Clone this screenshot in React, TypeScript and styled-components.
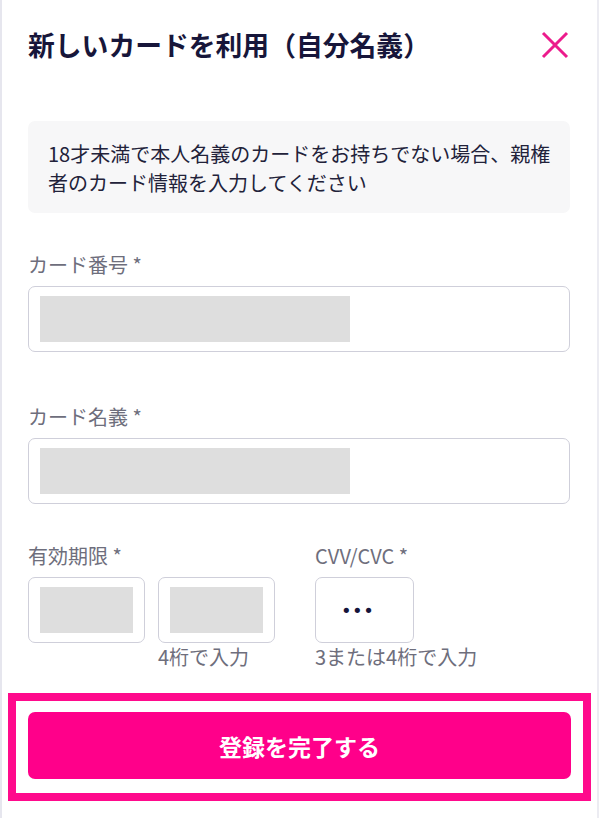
import React from "react";
import styled, { createGlobalStyle } from "styled-components";

const Global = createGlobalStyle`
  html, body { margin: 0; padding: 0; background: #ffffff; }
  body { font-family: "Noto Sans CJK JP", "Noto Sans", sans-serif; }
  * { box-sizing: border-box; }
`;

const Sheet = styled.div`
  width: 599px;
  min-height: 818px;
  border-left: 2px solid #e6e6ee;
  border-right: 2px solid #ececf2;
  background: #fff;
  display: flex;
  flex-direction: column;
`;

const Content = styled.div`
  padding: 27px 27px 0 26px;
  display: flex;
  flex-direction: column;
`;

const Header = styled.div`
  display: flex;
  align-items: center;
  justify-content: space-between;
  height: 36px;
`;

const Title = styled.h1`
  margin: 0;
  font-size: 26.8px;
  line-height: 36px;
  font-weight: 700;
  color: #17163a;
`;

const CloseButton = styled.button`
  border: none;
  background: none;
  padding: 0;
  width: 28px;
  height: 28px;
  margin-right: 1px;
  display: flex;
  align-items: center;
  justify-content: center;
  cursor: pointer;
`;

const Notice = styled.div`
  margin-top: 58px;
  background: #f7f7f8;
  border-radius: 7px;
  padding: 18px 14px 16px 20px;
  font-size: 20px;
  line-height: 29px;
  color: #22223a;
`;

const Label = styled.div<{ $top: number }>`
  margin-top: ${(p) => p.$top}px;
  font-size: 20px;
  line-height: 28px;
  color: #6e6e7c;
`;

const InputBox = styled.div<{ $width?: number }>`
  margin-top: 7px;
  width: ${(p) => (p.$width ? `${p.$width}px` : "100%")};
  height: 66px;
  border: 1.5px solid #cfcfda;
  border-radius: 7px;
  padding: 9px 11px;
  display: flex;
  align-items: center;
  background: #fff;
`;

const Redacted = styled.div<{ $width: number }>`
  width: ${(p) => p.$width}px;
  height: 100%;
  background: #dedede;
`;

const Dots = styled.span`
  padding-left: 14px;
  font-size: 18px;
  letter-spacing: 0.5px;
  color: #15143a;
  font-family: "DejaVu Sans", sans-serif;
`;

const Row = styled.div`
  display: flex;
  gap: 40px;
`;

const FieldGroup = styled.div`
  display: flex;
  flex-direction: column;
`;

const Pair = styled.div`
  display: flex;
  gap: 13px;
`;

const PairItem = styled.div`
  display: flex;
  flex-direction: column;
`;

const Hint = styled.div`
  font-size: 20px;
  line-height: 28px;
  color: #6e6e7c;
  height: 28px;
`;

const Footer = styled.div`
  margin: 22px 6px 0 6px;
  border: 8px solid #ff0a8c;
  padding: 11px 12px 14px 12px;
`;

const Submit = styled.button`
  width: 100%;
  height: 67px;
  border: none;
  border-radius: 7px;
  background: #ff008a;
  color: #fff;
  font-family: "Noto Sans CJK JP", "Noto Sans", sans-serif;
  font-size: 23px;
  font-weight: 700;
  cursor: pointer;
`;

export default function App() {
  return (
    <>
      <Global />
      <Sheet>
        <Content>
          <Header>
            <Title>新しいカードを利用（自分名義）</Title>
            <CloseButton aria-label="閉じる">
              <svg width="28" height="28" viewBox="0 0 28 28">
                <path d="M2 2 L26 26 M26 2 L2 26" stroke="#ec1b8c" strokeWidth="3" strokeLinecap="butt" fill="none" />
              </svg>
            </CloseButton>
          </Header>
          <Notice>
            18才未満で本人名義のカードをお持ちでない場合、親権者のカード情報を入力してください
          </Notice>

          <Label $top={38}>カード番号 *</Label>
          <InputBox>
            <Redacted $width={310} />
          </InputBox>

          <Label $top={51}>カード名義 *</Label>
          <InputBox>
            <Redacted $width={310} />
          </InputBox>

          <Row>
            <FieldGroup>
              <Label $top={38}>有効期限 *</Label>
              <Pair>
                <PairItem>
                  <InputBox $width={117}>
                    <Redacted $width={94} />
                  </InputBox>
                  <Hint />
                </PairItem>
                <PairItem>
                  <InputBox $width={117}>
                    <Redacted $width={94} />
                  </InputBox>
                  <Hint>4桁で入力</Hint>
                </PairItem>
              </Pair>
            </FieldGroup>
            <FieldGroup>
              <Label $top={38}>CVV/CVC *</Label>
              <InputBox $width={99}>
                <Dots>•••</Dots>
              </InputBox>
              <Hint>3または4桁で入力</Hint>
            </FieldGroup>
          </Row>
        </Content>
        <Footer>
          <Submit>登録を完了する</Submit>
        </Footer>
      </Sheet>
    </>
  );
}
